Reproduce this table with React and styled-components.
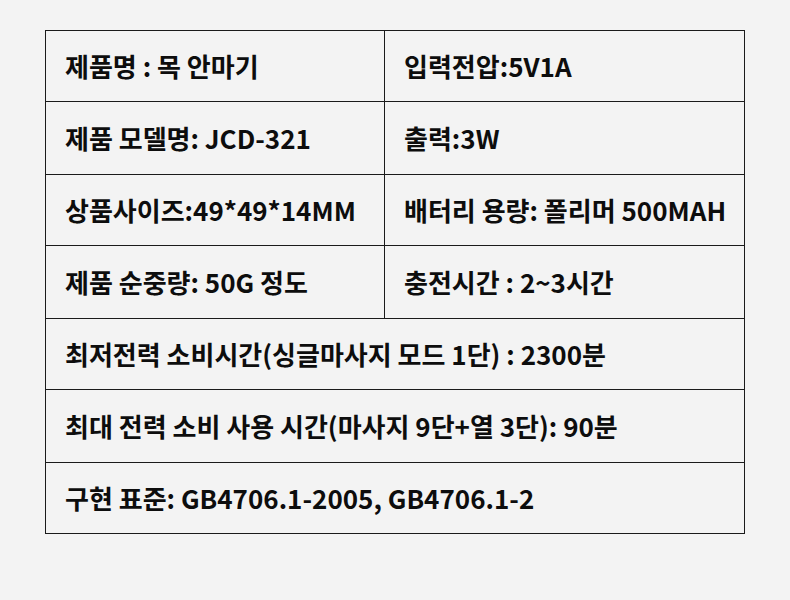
import React from "react";
import { createGlobalStyle, styled } from "styled-components";

const GlobalStyle = createGlobalStyle`
  * {
    margin: 0;
    padding: 0;
    box-sizing: border-box;
  }
  body {
    background-color: #f3f3f3;
    font-family: "Noto Sans CJK KR", "Noto Sans", sans-serif;
  }
`;

const Page = styled.div`
  width: 790px;
  height: 600px;
  padding: 30px 45px 0 45px;
`;

const Table = styled.div`
  display: grid;
  grid-template-columns: 339px 360px;
  width: 700px;
  border-top: 1px solid #1a1a1a;
  border-left: 1px solid #1a1a1a;
`;

const Cell = styled.div`
  grid-column: ${(p) => (p.$wide ? "1 / span 2" : "auto")};
  height: ${(p) => p.$h}px;
  display: flex;
  align-items: center;
  padding-left: 19px;
  padding-bottom: 2px;
  border-right: 1px solid #1a1a1a;
  border-bottom: 1px solid #1a1a1a;
  color: #0d0d0d;
  font-size: 26px;
  font-weight: 700;
  letter-spacing: 0;
  white-space: nowrap;
`;

const rows = [
  { h: 71, cells: ["제품명 : 목 안마기", "입력전압:5V1A"] },
  { h: 73, cells: ["제품 모델명: JCD-321", "출력:3W"] },
  { h: 71, cells: ["상품사이즈:49*49*14MM", "배터리 용량: 폴리머 500MAH"] },
  { h: 73, cells: ["제품 순중량: 50G 정도", "충전시간 : 2~3시간"] },
  { h: 71, cells: ["최저전력 소비시간(싱글마사지 모드 1단) : 2300분"] },
  { h: 73, cells: ["최대 전력 소비 사용 시간(마사지 9단+열 3단): 90분"] },
  { h: 71, cells: ["구현 표준: GB4706.1-2005, GB4706.1-2"] },
];

export default function App() {
  return (
    <>
      <GlobalStyle />
      <Page>
        <Table>
          {rows.map((row, i) =>
            row.cells.map((text, j) => (
              <Cell key={`${i}-${j}`} $h={row.h} $wide={row.cells.length === 1}>
                {text}
              </Cell>
            ))
          )}
        </Table>
      </Page>
    </>
  );
}
